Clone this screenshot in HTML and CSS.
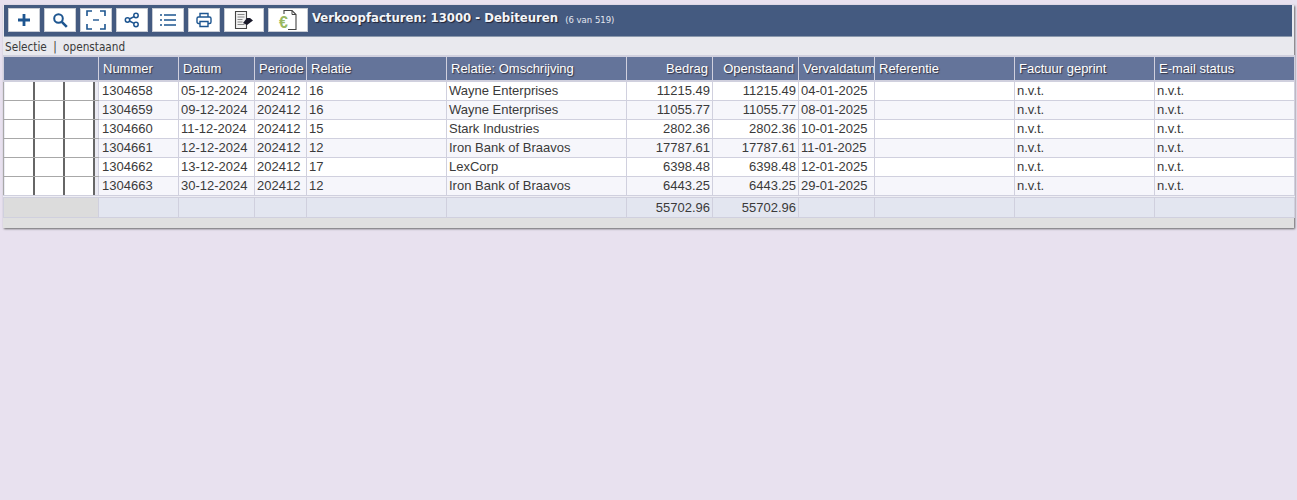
FILE: index.html
```html
<!DOCTYPE html>
<html lang="nl">
<head>
<meta charset="utf-8">
<title>Verkoopfacturen</title>
<link rel="stylesheet" href="styles.css">
</head>
<body>
<div class="panel">
  <div class="titlebar">
    <button class="tool w32"><svg width="16" height="16" viewBox="0 0 16 16"><path d="M8 2v12M2 8h12" stroke="#1d5590" stroke-width="2.8" fill="none"/></svg></button>
    <button class="tool w32"><svg width="16" height="16" viewBox="0 0 16 16"><circle cx="6.500" cy="6.500" r="4.300" stroke="#1d5590" stroke-width="2" fill="none"/><path d="M9.800 9.800l5 5" stroke="#1d5590" stroke-width="2.600" fill="none"/></svg></button>
    <button class="tool w32"><svg width="20" height="20" viewBox="0 0 20 20"><path d="M1 6V1h5M14 1h5v5M19 14v5h-5M6 19H1v-5" stroke="#1d5590" stroke-width="1.600" fill="none"/><path d="M7 10h6" stroke="#1d5590" stroke-width="1.400"/></svg></button>
    <button class="tool w32"><svg width="16" height="16" viewBox="0 0 16 16"><g stroke="#1d5590" stroke-width="1.500" fill="none"><circle cx="3.500" cy="8" r="2.200"/><circle cx="12" cy="3.500" r="2.200"/><circle cx="12" cy="12.500" r="2.200"/><path d="M5.500 7l4.500-2.400M5.500 9l4.500 2.400"/></g></svg></button>
    <button class="tool w32"><svg width="18" height="16" viewBox="0 0 18 16"><path d="M5 3h12M5 8h12M5 13h12M1 3h2M1 8h2M1 13h2" stroke="#1d5590" stroke-width="1.700" fill="none"/></svg></button>
    <button class="tool w32"><svg width="16" height="16" viewBox="0 0 16 16"><g stroke="#1d5590" stroke-width="1.400" fill="none"><path d="M4 5V1.500h8V5"/><rect x="1" y="5" width="14" height="6.500" rx="1.500"/><path d="M4 9.500h8v5H4z" fill="#fff"/></g></svg></button>
    <button class="tool w40"><svg width="20" height="20" viewBox="0 0 20 20"><path d="M1.500 1.500h11v17h-11z" fill="#f2f2f2" stroke="#444" stroke-width="1.100"/><path d="M3.500 4.500h7M3.500 7h7M3.500 9.500h5M3.500 12h5M3.500 14.500h7" stroke="#888" stroke-width="1"/><path d="M9 13l4-5h3l3 2.500-6 4.500z" fill="#1a1a2a"/></svg></button>
    <button class="tool w40"><svg width="20" height="22" viewBox="0 0 20 22"><path d="M6 5V1.500h8l4 4v15H10" fill="none" stroke="#444" stroke-width="1.100"/><path d="M14 1.500v4h4" fill="none" stroke="#444"/><text x="1" y="19" class="euro">€</text></svg></button>
    <span class="title">Verkoopfacturen: 13000 - Debiteuren</span>
    <span class="count">(6 van 519)</span>
  </div>
  <div class="selection">Selectie | openstaand</div>
  <table class="grid">
    <colgroup>
      <col class="c95">
      <col class="c80"><col class="c76"><col class="c52"><col class="c140"><col class="c180">
      <col class="c86"><col class="c86"><col class="c76"><col class="c140"><col class="c140"><col class="c140">
    </colgroup>
    <thead>
      <tr>
        <th></th><th>Nummer</th><th>Datum</th><th>Periode</th><th>Relatie</th><th>Relatie: Omschrijving</th>
        <th class="num">Bedrag</th><th class="num">Openstaand</th><th>Vervaldatum</th><th>Referentie</th><th>Factuur geprint</th><th>E-mail status</th>
      </tr>
    </thead>
    <tbody>
      <tr><td class="actions"><div class="boxes"><span class="box"></span><span class="box"></span><span class="box"></span></div></td><td class="nr">1304658</td><td>05-12-2024</td><td>202412</td><td>16</td><td>Wayne Enterprises</td><td class="num">11215.49</td><td class="num">11215.49</td><td>04-01-2025</td><td></td><td>n.v.t.</td><td>n.v.t.</td></tr>
      <tr class="alt"><td class="actions"><div class="boxes"><span class="box"></span><span class="box"></span><span class="box"></span></div></td><td class="nr">1304659</td><td>09-12-2024</td><td>202412</td><td>16</td><td>Wayne Enterprises</td><td class="num">11055.77</td><td class="num">11055.77</td><td>08-01-2025</td><td></td><td>n.v.t.</td><td>n.v.t.</td></tr>
      <tr><td class="actions"><div class="boxes"><span class="box"></span><span class="box"></span><span class="box"></span></div></td><td class="nr">1304660</td><td>11-12-2024</td><td>202412</td><td>15</td><td>Stark Industries</td><td class="num">2802.36</td><td class="num">2802.36</td><td>10-01-2025</td><td></td><td>n.v.t.</td><td>n.v.t.</td></tr>
      <tr class="alt"><td class="actions"><div class="boxes"><span class="box"></span><span class="box"></span><span class="box"></span></div></td><td class="nr">1304661</td><td>12-12-2024</td><td>202412</td><td>12</td><td>Iron Bank of Braavos</td><td class="num">17787.61</td><td class="num">17787.61</td><td>11-01-2025</td><td></td><td>n.v.t.</td><td>n.v.t.</td></tr>
      <tr><td class="actions"><div class="boxes"><span class="box"></span><span class="box"></span><span class="box"></span></div></td><td class="nr">1304662</td><td>13-12-2024</td><td>202412</td><td>17</td><td>LexCorp</td><td class="num">6398.48</td><td class="num">6398.48</td><td>12-01-2025</td><td></td><td>n.v.t.</td><td>n.v.t.</td></tr>
      <tr class="alt"><td class="actions"><div class="boxes"><span class="box"></span><span class="box"></span><span class="box"></span></div></td><td class="nr">1304663</td><td>30-12-2024</td><td>202412</td><td>12</td><td>Iron Bank of Braavos</td><td class="num">6443.25</td><td class="num">6443.25</td><td>29-01-2025</td><td></td><td>n.v.t.</td><td>n.v.t.</td></tr>
    </tbody>
    <tfoot>
      <tr><td class="blank"></td><td></td><td></td><td></td><td></td><td></td><td class="num">55702.96</td><td class="num">55702.96</td><td></td><td></td><td></td><td></td></tr>
    </tfoot>
  </table>
  <div class="strip"></div>
</div>
</body>
</html>
```
FILE: styles.css
```css
html, body { margin: 0; height: 100%; }
body {
  background: #e8e1ef;
  padding: 5px 0 0 3px;
  box-sizing: border-box;
  font-family: "Liberation Sans", Arial, sans-serif;
  font-size: 13px;
  color: #3a3a3a;
}
.panel {
  width: 1291px;
  background: #e9e9ee;
  box-shadow: 1px 1px 2px #666;
}
.titlebar {
  height: 32px;
  margin-left: 1px;
  margin-right: 2px;
  background: #445a80;
  border-bottom: 1px solid #8a98ac;
  box-sizing: border-box;
  display: flex;
  align-items: flex-start;
  padding: 3px 0 0 4px;
  gap: 4px;
}
.tool {
  height: 24px;
  padding: 0;
  border: 1px solid #c8ccd4;
  border-radius: 0;
  background: #fff;
  display: flex;
  align-items: center;
  justify-content: center;
}
.w32 { width: 32px; }
.w40 { width: 40px; }
.euro { font: bold 16px "Liberation Sans", sans-serif; fill: #98b860; }
.title {
  font: bold 13px/20px "DejaVu Sans Condensed", "DejaVu Sans", sans-serif;
  color: #f4f6fa;
  text-shadow: 1px 1px 1px #223;
}
.count {
  margin-left: 3px;
  font: 8.500px/24px "DejaVu Sans", Verdana, sans-serif;
  color: #e4e8f0;
}
.selection {
  height: 18px;
  margin-left: 2px;
  box-sizing: border-box;
  font: 11.700px/20px "DejaVu Sans Condensed", "DejaVu Sans", sans-serif;
  word-spacing: 3px;
  color: #3a3a3a;
}
.grid {
  width: 1292px;
  table-layout: fixed;
  border-collapse: collapse;
  background: #eeeef4;
}
.c95 { width: 95px; }
.c80 { width: 80px; }
.c76 { width: 76px; }
.c52 { width: 52px; }
.c140 { width: 140px; }
.c180 { width: 180px; }
.c86 { width: 86px; }
.grid th {
  height: 23px;
  padding: 0 0 0 4px;
  background: #64749a;
  border: 1px solid #d0d0de;
  border-top: 2px solid #d0d0de;
  border-bottom: 2px solid #d0d0de;
  color: #fff;
  font-weight: normal;
  text-align: left;
  white-space: nowrap;
  overflow: hidden;
  text-shadow: 1px 1px 1px #334;
}
.grid td {
  height: 18px;
  padding: 0 2px;
  background: #fff;
  border: 1px solid #d0d0de;
  white-space: nowrap;
  overflow: hidden;
  line-height: 18px;
}
.grid .alt td { background: #f6f6fb; }
.grid td.nr { padding-left: 3px; }
.grid th.num { text-align: right; padding-right: 4px; padding-left: 0; }
.grid td.num { text-align: right; padding-right: 2px; padding-left: 0; }
.grid td.actions, .grid .alt td.actions {
  padding: 0;
  background: #ebebf3;
  border-top-color: #a8a8a8;
  border-bottom-color: #a8a8a8;
  border-left-color: #a8a8a8;
}
.boxes { display: flex; height: 18px; margin-left: 1px; }
.box {
  width: 30px;
  box-sizing: border-box;
  background: #fff;
  border-right: 2px solid #666;
}
.grid tfoot td {
  height: 19px;
  background: #e3e6f0;
  border-top: 3px double #d0d0de;
}
.grid tfoot td.blank { background: #dcdcdc; }
.strip {
  height: 10px;
  background: #e0e0e0;
}
```
